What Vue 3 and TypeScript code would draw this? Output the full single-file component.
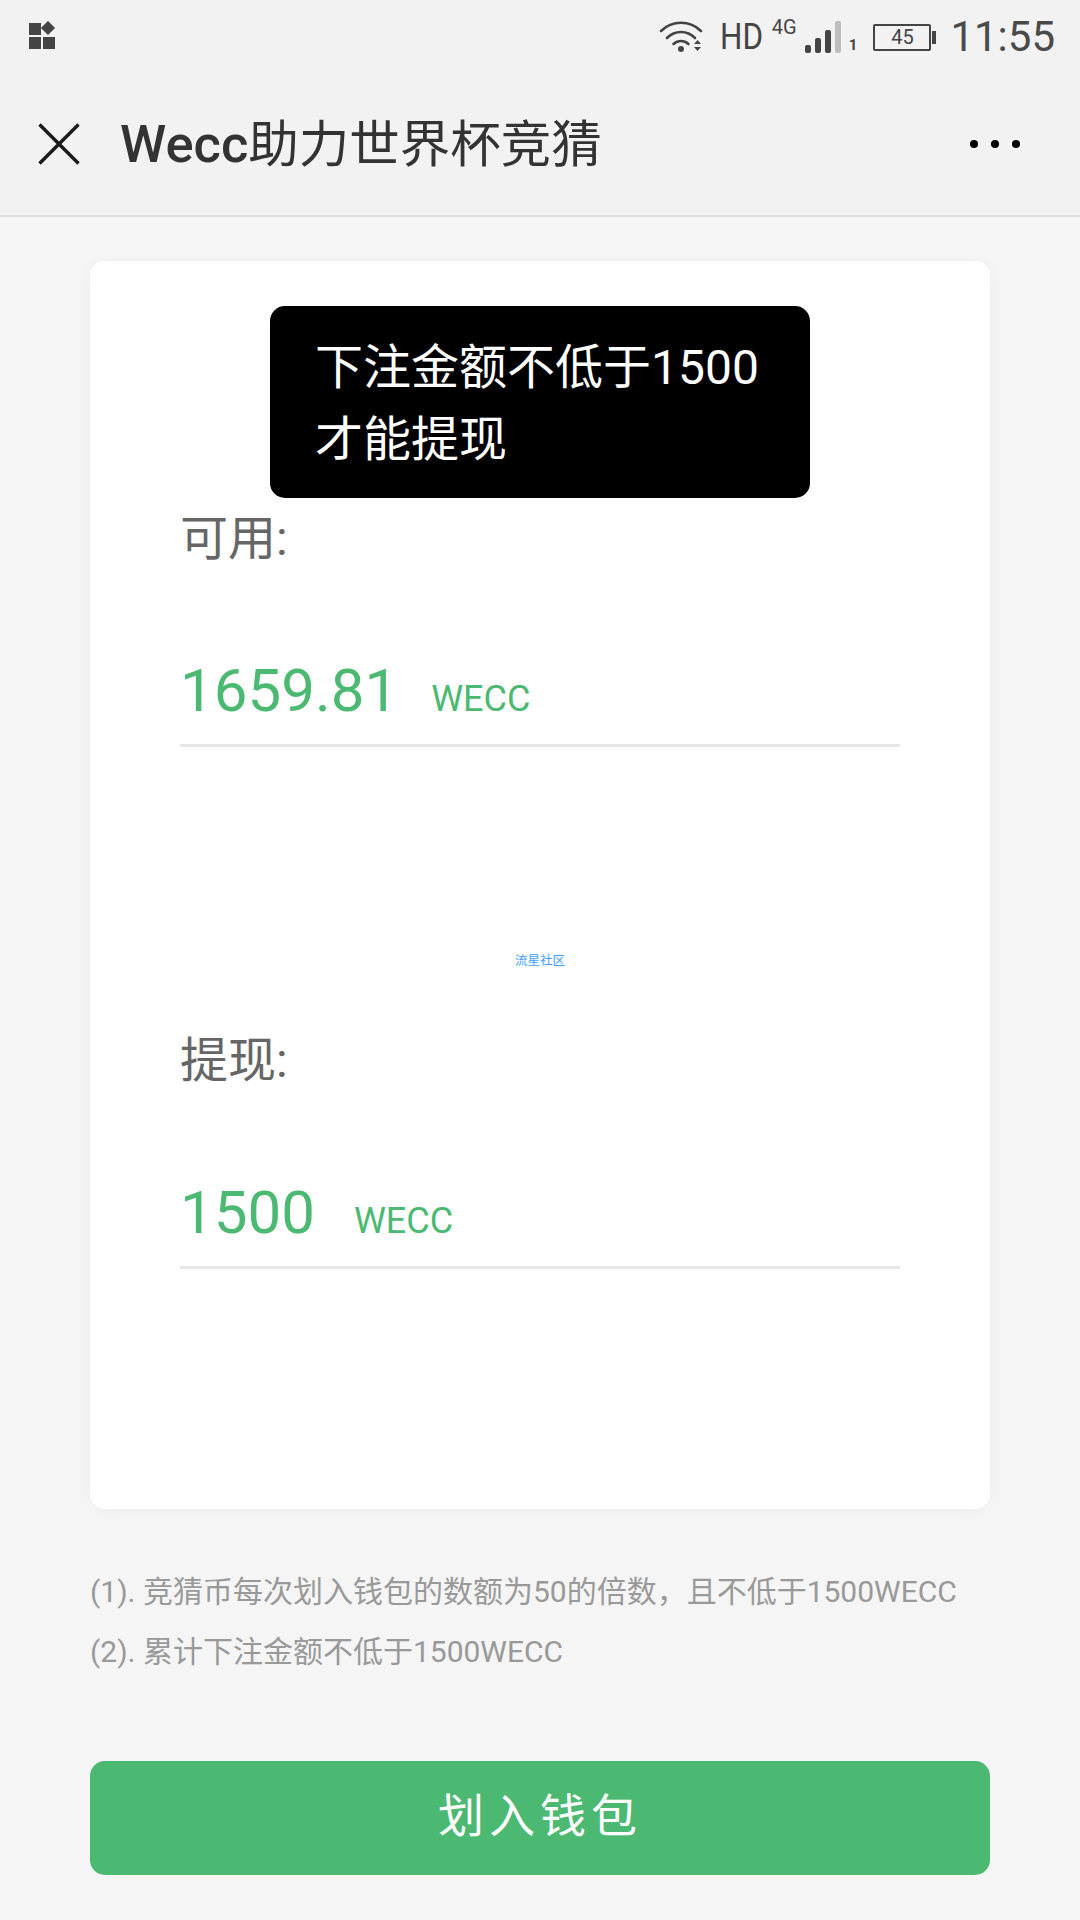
<script setup lang="ts">
const notes: string[] = [
  '(1). 竞猜币每次划入钱包的数额为50的倍数，且不低于1500WECC',
  '(2). 累计下注金额不低于1500WECC'
]
</script>

<template>
  <div class="page">
    <div class="top">
      <div class="status">
        <svg class="apps" width="28" height="28" viewBox="0 0 28 28">
          <rect x="0" y="2" width="12" height="12" fill="#444" />
          <rect x="14" y="2" width="10" height="10" fill="#444" transform="rotate(45 19 7)" />
          <rect x="0" y="16" width="12" height="12" fill="#444" />
          <rect x="14" y="16" width="12" height="12" fill="#444" />
        </svg>
        <div class="status-right">
          <svg class="wifi" width="46" height="34" viewBox="0 0 46 34" fill="none" stroke="#444" stroke-width="2.6" stroke-linecap="round">
            <path d="M2 11 C13 0 31 0 42 11" />
            <path d="M8 18 C16 10 28 10 36 18" />
            <path d="M14.5 24 C19 20 25 20 29.5 24" />
            <circle cx="22" cy="29" r="3" fill="#444" stroke="none" />
            <path d="M35 24 L38.5 20 L42 24 Z M35 27 L38.5 31 L42 27 Z" fill="#444" stroke="none" />
          </svg>
          <span class="hd">HD</span>
          <span class="net">4G</span>
          <svg class="signal" width="36" height="32" viewBox="0 0 36 32">
            <rect x="0" y="24" width="6" height="8" rx="2" fill="#444" />
            <rect x="10" y="17" width="6" height="15" rx="2" fill="#444" />
            <rect x="20" y="9" width="6" height="23" rx="2" fill="#444" />
            <rect x="30" y="0" width="6" height="32" rx="2" fill="#bdbdbd" />
          </svg>
          <span class="sim">1</span>
          <div class="battery"><span>45</span></div>
          <span class="time">11:55</span>
        </div>
      </div>
      <header class="nav">
        <svg class="close" width="42" height="42" viewBox="0 0 42 42" stroke="#1a1a1a" stroke-width="3.4" fill="none">
          <path d="M1.5 1.5 L40.5 40.5 M40.5 1.5 L1.5 40.5" />
        </svg>
        <h1 class="title"><span class="latin">Wecc</span>助力世界杯竞猜</h1>
        <div class="more"><i></i><i></i><i></i></div>
      </header>
    </div>

    <main class="content">
      <section class="card">
        <div class="toast">下注金额不低于1500才能提现</div>
        <div class="field first">
          <div class="label">可用:</div>
          <div class="value"><span class="num">1659.81</span><span class="unit tight">WECC</span></div>
        </div>
        <div class="credit">流星社区</div>
        <div class="field">
          <div class="label">提现:</div>
          <div class="value"><span class="num">1500</span><span class="unit loose">WECC</span></div>
        </div>
      </section>

      <div class="notes">
        <p v-for="n in notes" :key="n">{{ n }}</p>
      </div>

      <button class="submit" type="button">划入钱包</button>
    </main>
  </div>
</template>

<style>
html, body { margin: 0; padding: 0; }
</style>

<style scoped>
.page {
  width: 1080px;
  height: 1920px;
  background: #f5f5f5;
  font-family: Roboto, "Noto Sans CJK SC", sans-serif;
  display: flex;
  flex-direction: column;
  overflow: hidden;
}
.top {
  background: #f2f2f2;
  border-bottom: 2px solid #dedede;
  height: 217px;
  box-sizing: border-box;
}
.status {
  height: 72px;
  box-sizing: border-box;
  padding: 2px 25px 0 29px;
  display: flex;
  align-items: center;
  justify-content: space-between;
}
.apps { margin-top: -4px; }
.status-right {
  display: flex;
  align-items: center;
  color: #444;
}
.wifi { margin-right: 15px; }
.hd {
  font-size: 37px;
  line-height: 36px;
  margin-right: 8px;
  transform: scaleX(0.85);
  transform-origin: left center;
  width: 44px;
}
.net {
  font-size: 20px;
  line-height: 20px;
  margin-top: -20px;
  margin-right: 7px;
  width: 26px;
}
.sim {
  font-size: 15px;
  font-weight: 700;
  line-height: 16px;
  margin: 16px 16px 0 8px;
}
.battery {
  width: 58px;
  height: 27px;
  border: 2px solid #444;
  border-radius: 2px;
  box-sizing: border-box;
  position: relative;
  display: flex;
  align-items: center;
  justify-content: center;
  margin-right: 19px;
  font-size: 20px;
}
.battery::after {
  content: "";
  position: absolute;
  right: -7px;
  top: 5px;
  width: 4px;
  height: 13px;
  background: #444;
}
.time {
  font-size: 42px;
  line-height: 48px;
  color: #4a4a4a;
}
.nav {
  height: 143px;
  display: flex;
  align-items: center;
  padding: 0 60px 0 38px;
  margin-top: 0;
}
.title {
  flex: 1;
  margin: 2px 0 0 40px;
  font-size: 50.5px;
  font-weight: 400;
  color: #333;
  line-height: 60px;
}
.latin {
  font-size: 52.5px;
  font-weight: 500;
}
.more {
  display: flex;
  gap: 13px;
}
.more i {
  width: 8px;
  height: 8px;
  border-radius: 50%;
  background: #000;
}
.content {
  flex: 1;
  padding: 44px 90px 0;
  display: flex;
  flex-direction: column;
}
.card {
  position: relative;
  height: 1248px;
  box-sizing: border-box;
  background: #fff;
  border-radius: 15px;
  padding: 0 90px;
  box-shadow: 0 2px 12px rgba(0, 0, 0, 0.04);
}
.toast {
  position: absolute;
  left: 180px;
  top: 45px;
  width: 540px;
  box-sizing: border-box;
  padding: 26px 45px 22px;
  background: #000;
  color: #fff;
  border-radius: 15px;
  font-size: 48px;
  line-height: 72px;
}
.field { border-bottom: 3px solid #e8e8e8; }
.first { margin-top: 247px; }
.label {
  font-size: 48px;
  line-height: 62px;
  color: #666;
}
.value {
  margin-top: 79px;
  height: 95px;
  display: flex;
  align-items: baseline;
  color: #4cb973;
}
.num {
  font-size: 60px;
  line-height: 84px;
}
.unit {
  font-size: 36px;
}
.tight { margin-left: 33px; }
.loose { margin-left: 39px; }
.credit {
  margin-top: 206px;
  margin-bottom: 61px;
  text-align: center;
  font-size: 12.5px;
  line-height: 16px;
  color: #3d9eff;
}
.notes {
  margin-top: 53px;
  font-size: 30px;
  line-height: 60px;
  color: #999;
}
.notes p { margin: 0; }
.submit {
  margin-top: 79px;
  height: 114px;
  border: none;
  border-radius: 15px;
  padding: 0 0 12px;
  background: #4cb973;
  color: #fff;
  font-family: inherit;
  font-size: 46px;
  letter-spacing: 5px;
}
</style>
